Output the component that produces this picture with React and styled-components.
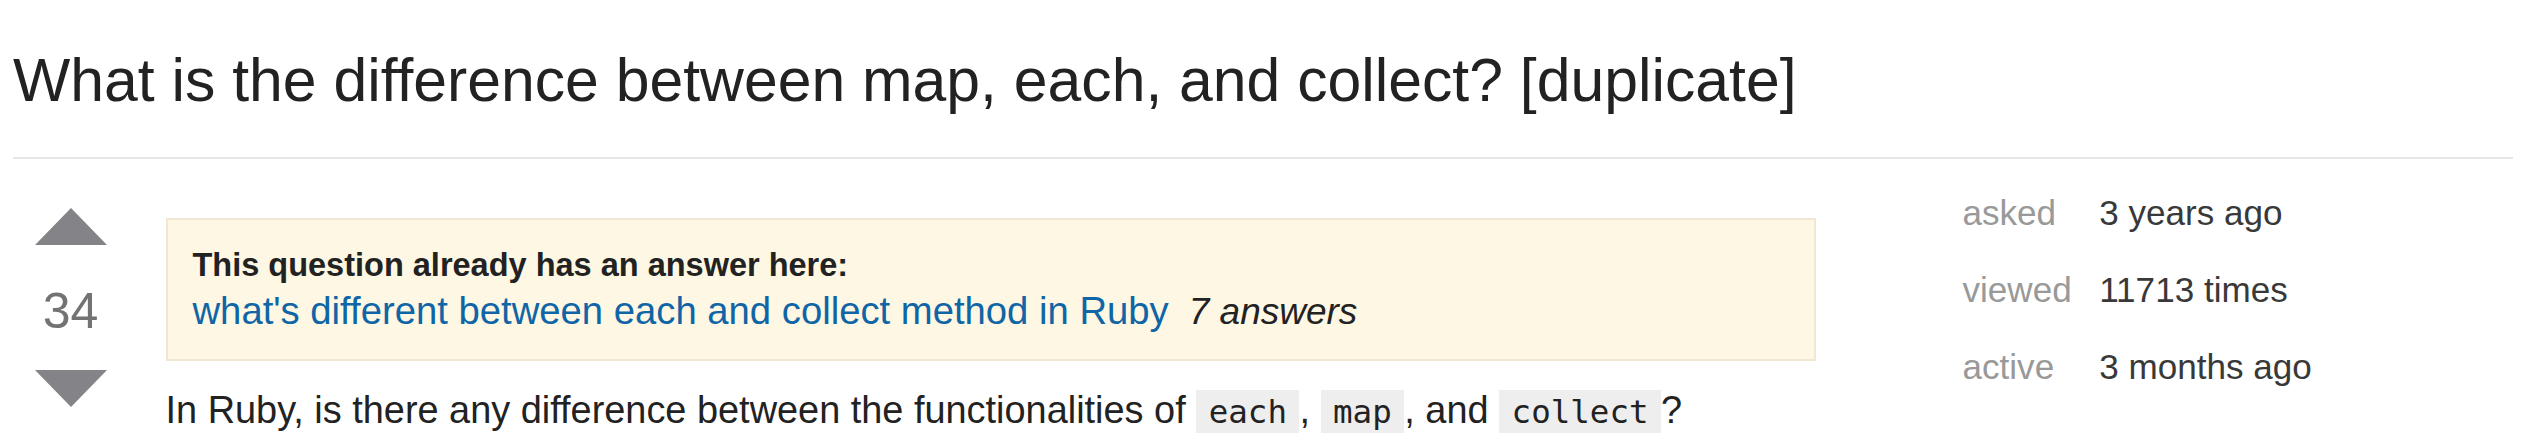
import React from "react"
import styled, { createGlobalStyle } from "styled-components"

const textColor = "#222"
const linkColor = "#0f65a5"

const GlobalStyle = createGlobalStyle`
  body {
    margin: 0;
    background: #fff;
    color: ${textColor};
    font-family: "Liberation Sans", Arial, Helvetica, sans-serif;
  }
`

const StyledPage = styled.div`
  width: 2500px;
  padding-left: 13px;
`

const StyledHeader = styled.div`
  padding: 41px 0 38px;
  border-bottom: 2.5px solid #e4e6e8;
`

const StyledTitle = styled.h1`
  margin: 0;
  font-size: 60.7px;
  line-height: 78px;
  font-weight: normal;
  color: ${textColor};
`

const StyledContent = styled.div`
  display: flex;
  align-items: flex-start;
  padding-top: 15px;
`

const StyledMain = styled.div`
  display: flex;
  align-items: flex-start;
  padding-top: 33.5px;
`

const StyledVoteCell = styled.div`
  width: 115px;
  margin-right: 37.5px;
  display: flex;
  flex-direction: column;
  align-items: center;
`

const StyledVoteCount = styled.div`
  font-size: 50px;
  line-height: 50px;
  margin: 41.5px 0 33.5px;
  color: #737373;
`

const StyledPost = styled.div`
  width: 1650px;
  margin-top: 10px;
`

const StyledNotice = styled.div`
  background: #fdf7e4;
  border: 2px solid #f1e7d4;
  padding: 24px 25px 23px;
`

const StyledNoticeTitle = styled.h2`
  margin: 0;
  font-size: 32.5px;
  line-height: 42px;
  font-weight: bold;
  color: ${textColor};
`

const StyledNoticeLine = styled.div`
  font-size: 38.25px;
  line-height: 49px;
`

const StyledLink = styled.a`
  color: ${linkColor};
  text-decoration: none;
`

const StyledAnswers = styled.span`
  margin-left: 20px;
  font-style: italic;
  font-size: 37px;
`

const StyledBody = styled.p`
  margin: 25px 0 0;
  font-size: 37.9px;
  line-height: 48.75px;
`

const StyledCode = styled.code`
  font-family: "DejaVu Sans Mono", "Liberation Mono", monospace;
  font-size: 32.5px;
  background: #eee;
  padding: 2.5px 12.5px;
  color: ${textColor};
`

const StyledInfo = styled.div`
  margin-left: 147px;
  display: grid;
  grid-template-columns: auto auto;
  column-gap: 27.5px;
  font-size: 35.1px;
  line-height: 77px;
`

const StyledInfoLabel = styled.div`
  color: #999;
`

const StyledInfoValue = styled.div`
  color: #393939;
`

const VoteArrow = ({ down }) => (
  <svg width="72" height="37" viewBox="0 0 72 37" style={{ display: "block" }}>
    <polygon
      points={down ? "0,0 72,0 36,37" : "0,37 36,0 72,37"}
      fill="#838388"
    />
  </svg>
)

const info = [
  ["asked", "3 years ago"],
  ["viewed", "11713 times"],
  ["active", "3 months ago"],
]

const App = () => {
  return (
    <StyledPage>
      <GlobalStyle />
      <StyledHeader>
        <StyledTitle>
          What is the difference between map, each, and collect? [duplicate]
        </StyledTitle>
      </StyledHeader>
      <StyledContent>
        <StyledMain>
          <StyledVoteCell>
            <VoteArrow />
            <StyledVoteCount>34</StyledVoteCount>
            <VoteArrow down />
          </StyledVoteCell>
          <StyledPost>
            <StyledNotice>
              <StyledNoticeTitle>
                This question already has an answer here:
              </StyledNoticeTitle>
              <StyledNoticeLine>
                <StyledLink href="#">
                  what's different between each and collect method in Ruby
                </StyledLink>
                <StyledAnswers>7 answers</StyledAnswers>
              </StyledNoticeLine>
            </StyledNotice>
            <StyledBody>
              In Ruby, is there any difference between the functionalities of{" "}
              <StyledCode>each</StyledCode>, <StyledCode>map</StyledCode>, and{" "}
              <StyledCode>collect</StyledCode>?
            </StyledBody>
          </StyledPost>
        </StyledMain>
        <StyledInfo>
          {info.map(([label, value]) => (
            <React.Fragment key={label}>
              <StyledInfoLabel>{label}</StyledInfoLabel>
              <StyledInfoValue>{value}</StyledInfoValue>
            </React.Fragment>
          ))}
        </StyledInfo>
      </StyledContent>
    </StyledPage>
  )
}

export default App
